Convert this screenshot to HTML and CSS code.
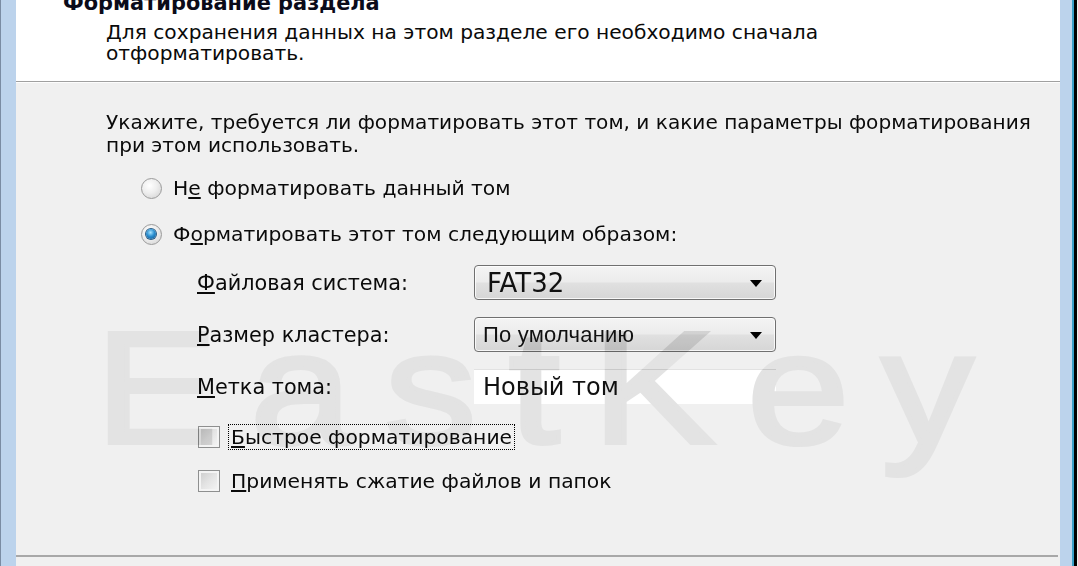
FILE: index.html
```html
<!DOCTYPE html>
<html lang="ru">
<head>
<meta charset="utf-8">
<title>Форматирование раздела</title>
<link rel="stylesheet" href="styles.css">
</head>
<body>
<div class="window">
  <div class="frame-left"></div>
  <div class="dialog">
    <header class="head">
      <h1 class="title">Форматирование раздела</h1>
      <p class="desc">Для сохранения данных на этом разделе его необходимо сначала<br>отформатировать.</p>
    </header>
    <main class="content">
      <p class="intro">Укажите, требуется ли форматировать этот том, и какие параметры форматирования<br>при этом использовать.</p>
      <div class="options">
        <div class="radio-row"><span class="radio"></span><span class="label">Н<u>е</u> форматировать данный том</span></div>
        <div class="radio-row"><span class="radio checked"></span><span class="label">Ф<u>о</u>рматировать этот том следующим образом:</span></div>
      </div>
      <div class="fields">
        <span class="field-label"><u>Ф</u>айловая система:</span>
        <div class="combo"><span class="combo-text big">FAT32</span><span class="arrow"></span></div>
        <span class="field-label"><u>Р</u>азмер кластера:</span>
        <div class="combo"><span class="combo-text narrow">По умолчанию</span><span class="arrow"></span></div>
        <span class="field-label"><u>М</u>етка тома:</span>
        <div class="textbox"><span class="combo-text vol">Новый том</span></div>
      </div>
      <div class="checks">
        <div class="check-row"><span class="checkbox"></span><span class="label focus"><u>Б</u>ыстрое форматирование</span></div>
        <div class="check-row"><span class="checkbox"></span><span class="label"><u>П</u>рименять сжатие файлов и папок</span></div>
      </div>
    </main>
    <footer class="foot"></footer>
  </div>
  <div class="frame-right"></div>
  <div class="watermark">EastKey</div>
</div>
</body>
</html>
```

FILE: styles.css
```css
html, body {
  margin: 0;
  padding: 0;
  background: #f0f0f0;
}
body {
  width: 1078px;
  height: 566px;
  overflow: hidden;
  font-family: "DejaVu Sans", "Liberation Sans", sans-serif;
  color: #0a0a0a;
}
.window {
  position: relative;
  display: flex;
  width: 1078px;
  height: 566px;
  overflow: hidden;
  isolation: isolate;
}
.frame-left {
  width: 15px;
  flex: none;
  background: #bcd3ec;
  border-left: 1px solid #7a8ca3;
}
.frame-right {
  width: 12px;
  flex: none;
  background: #bcd3ec;
  border-right: 2px solid #3aa0c8;
  box-shadow: 3px 0 0 #000;
  margin-right: 4px;
}
.dialog {
  flex: 1;
  display: flex;
  flex-direction: column;
  min-width: 0;
}
.head {
  flex: none;
  background: #fff;
  border-bottom: 1px solid #a0a0a0;
  padding-left: 47px;
  box-sizing: border-box;
  height: 82px;
  overflow: hidden;
}
.title {
  margin: -9px 0 0;
  font-size: 20.9px;
  line-height: 24px;
  font-weight: bold;
  color: #0b0b1a;
  white-space: nowrap;
}
.desc {
  margin: 7px 0 0 43px;
  font-size: 20.2px;
  line-height: 21px;
}
.content {
  flex: 1;
  padding: 28px 0 0 90px;
  border-top: 1px solid #fdfdfd;
}
.intro {
  margin: 0;
  font-size: 20.1px;
  line-height: 23px;
}
.options {
  margin: 19px 0 0 35px;
  display: flex;
  flex-direction: column;
  gap: 22px;
}
.radio-row, .check-row {
  display: flex;
  align-items: center;
  height: 24px;
}
.label {
  font-size: 20.3px;
  line-height: 24px;
}
.radio {
  width: 19px;
  height: 19px;
  border-radius: 50%;
  border: 1px solid #9a9a9a;
  background: radial-gradient(circle at 40% 35%, #ffffff 0%, #eeeeee 45%, #cfcfcf 100%);
  margin-right: 11px;
  position: relative;
  flex: none;
}
.radio.checked::after {
  content: "";
  position: absolute;
  left: 4px;
  top: 4px;
  width: 10px;
  height: 10px;
  border-radius: 50%;
  background: radial-gradient(circle at 45% 35%, #a8e4ff 0%, #2b8fd0 45%, #0b4f8a 100%);
  box-shadow: 0 0 0 1px #2a5d86;
}
.fields {
  margin: 19px 0 0 91px;
  display: grid;
  grid-template-columns: 277px 302px;
  grid-auto-rows: 35px;
  row-gap: 17px;
  align-items: center;
}
.field-label {
  font-size: 20.8px;
}
.combo {
  height: 35px;
  box-sizing: border-box;
  border: 1px solid #707070;
  border-radius: 4px;
  background: linear-gradient(#f4f4f4 0%, #ececec 48%, #e0e0e0 52%, #d6d6d6 100%);
  box-shadow: inset 0 0 0 1px rgba(255,255,255,0.8);
  display: flex;
  align-items: center;
  padding-left: 12px;
  position: relative;
}
.combo-text {
  font-size: 20px;
  color: #111;
}
.combo-text.big {
  font-size: 26px;
  font-family: "DejaVu Sans", sans-serif;
}
.combo-text.vol {
  font-size: 24px;
  font-family: "DejaVu Sans", sans-serif;
}
.combo-text.narrow {
  font-family: "Liberation Sans", sans-serif;
  font-size: 22px;
  letter-spacing: 0.2px;
  margin-left: -4px;
}
.arrow {
  position: absolute;
  right: 13px;
  top: 14px;
  width: 0;
  height: 0;
  border-left: 6px solid transparent;
  border-right: 6px solid transparent;
  border-top: 7px solid #000;
}
.textbox {
  height: 35px;
  box-sizing: border-box;
  background: #fff;
  border-top: 1px solid #e2e2e2;
  display: flex;
  align-items: center;
  padding-left: 9px;
}
.checks {
  margin: 20px 0 0 92px;
  display: flex;
  flex-direction: column;
  gap: 18px;
}
.check-row {
  height: 26px;
}
.checkbox {
  width: 22px;
  height: 22px;
  box-sizing: border-box;
  border: 1px solid #8e8f8f;
  background: linear-gradient(135deg, #cbcbcb 0%, #e4e4e4 50%, #f6f6f6 100%);
  box-shadow: inset 0 0 0 2px #f4f4f4;
  flex: none;
  margin-right: 8px;
}
.check-row .label {
  padding: 0 2px;
  line-height: 24px;
  border: 1px dotted transparent;
}
.check-row .label.focus {
  border-color: #000;
}
.foot {
  height: 9px;
  flex: none;
  border-top: 2px solid #a8a8a8;
  margin-right: 2px;
  background: #f0f0f0;
}
.watermark {
  position: absolute;
  left: 95px;
  top: 308px;
  font-family: "Liberation Sans", sans-serif;
  font-size: 160px;
  line-height: 160px;
  letter-spacing: 28px;
  transform: scaleX(1.15);
  transform-origin: left top;
  color: #e3e3e3;
  -webkit-text-stroke: 4px #e3e3e3;
  mix-blend-mode: multiply;
  pointer-events: none;
  white-space: nowrap;
}
```
